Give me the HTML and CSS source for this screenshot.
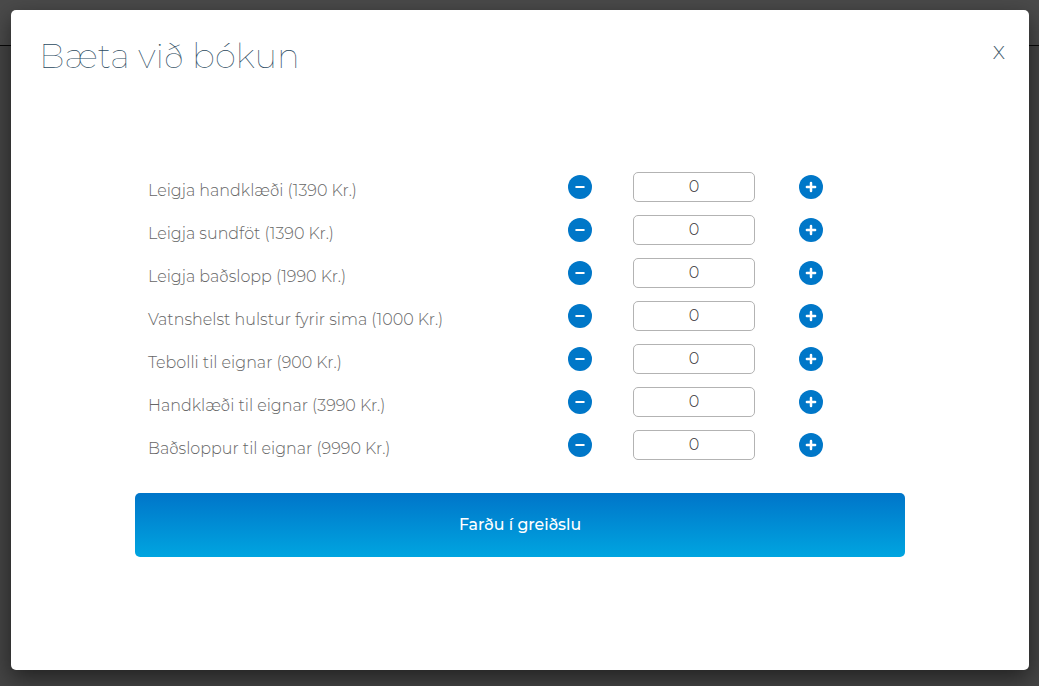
FILE: index.html
```html
<!DOCTYPE html>
<html lang="is">
<head>
<meta charset="utf-8">
<title>Bæta við bókun</title>
<link rel="stylesheet" href="styles.css">
</head>
<body>
<svg class="sprite" aria-hidden="true">
<symbol id="minus" viewBox="0 0 24 24"><circle cx="12" cy="12" r="12" fill="#0077c8"/><path d="M8.3 12h7.4" stroke="#fff" stroke-width="2.2" stroke-linecap="round"/></symbol>
<symbol id="plus" viewBox="0 0 24 24"><circle cx="12" cy="12" r="12" fill="#0077c8"/><path d="M7.9 12h8.2M12 7.9v8.2" stroke="#fff" stroke-width="2.5" stroke-linecap="round"/></symbol>
</svg>
<main class="modal">
<header class="header"><h1 class="title">Bæta við bókun</h1><button class="close">X</button></header>
<section class="items">
<div class="row"><span class="label">Leigja handklæði (1390 Kr.)</span><button class="step"><svg><use href="#minus"/></svg></button><input class="qty" value="0"><button class="step"><svg><use href="#plus"/></svg></button></div>
<div class="row"><span class="label">Leigja sundföt (1390 Kr.)</span><button class="step"><svg><use href="#minus"/></svg></button><input class="qty" value="0"><button class="step"><svg><use href="#plus"/></svg></button></div>
<div class="row"><span class="label">Leigja baðslopp (1990 Kr.)</span><button class="step"><svg><use href="#minus"/></svg></button><input class="qty" value="0"><button class="step"><svg><use href="#plus"/></svg></button></div>
<div class="row"><span class="label">Vatnshelst hulstur fyrir sima (1000 Kr.)</span><button class="step"><svg><use href="#minus"/></svg></button><input class="qty" value="0"><button class="step"><svg><use href="#plus"/></svg></button></div>
<div class="row"><span class="label">Tebolli til eignar (900 Kr.)</span><button class="step"><svg><use href="#minus"/></svg></button><input class="qty" value="0"><button class="step"><svg><use href="#plus"/></svg></button></div>
<div class="row"><span class="label">Handklæði til eignar (3990 Kr.)</span><button class="step"><svg><use href="#minus"/></svg></button><input class="qty" value="0"><button class="step"><svg><use href="#plus"/></svg></button></div>
<div class="row"><span class="label">Baðsloppur til eignar (9990 Kr.)</span><button class="step"><svg><use href="#minus"/></svg></button><input class="qty" value="0"><button class="step"><svg><use href="#plus"/></svg></button></div>
</section>
<button class="pay">Farðu í greiðslu</button>
</main>
</body>
</html>
```
FILE: styles.css
```css
* { box-sizing: border-box; }
body {
  margin: 0;
  height: 686px;
  padding: 10px 10px 16px 11px;
  overflow: hidden;
  font-family: Montserrat, Inter, "Open Sans", sans-serif;
  background: linear-gradient(#4a4a4a 45px, #080808 45px, #080808 46px, #444 46px);
}
.sprite { display: none; }
button { padding: 0; border: 0; background: none; font-family: inherit; }
.modal {
  height: 660px;
  display: flex;
  flex-direction: column;
  background: #fff;
  border-radius: 5px;
  box-shadow: 0 8px 22px rgba(0, 0, 0, .5);
}
.header {
  height: 162px;
  padding: 24px 24px 0 28px;
  display: flex;
  justify-content: space-between;
  align-items: flex-start;
}
.title {
  margin: 0;
  font-size: 34px;
  line-height: 44px;
  font-weight: 100;
  color: #2b4a60;
}
.close { font-size: 19px; line-height: 38px; font-weight: 300; color: #3f5a6c; }
.items { height: 321px; padding-left: 137px; }
.row {
  height: 43px;
  display: grid;
  grid-template-columns: 420px 65px 166px 24px;
  align-items: start;
}
.label {
  padding-top: 7px;
  font-size: 15.95px;
  line-height: 24px;
  font-weight: 300;
  color: #666;
  white-space: nowrap;
}
.step { width: 24px; height: 24px; margin-top: 3px; }
.step svg { display: block; width: 24px; height: 24px; }
.qty {
  width: 122px;
  height: 30px;
  padding: 0 0 1px;
  border: 1px solid #b3b3b3;
  border-radius: 5px;
  background: #fff;
  font: 300 16px/27px Montserrat, Inter, sans-serif;
  text-align: center;
  color: #333;
}
.pay {
  width: 770px;
  height: 64px;
  padding: 0 0 2px;
  margin-left: 124px;
  border-radius: 5px;
  background: linear-gradient(#0075c9, #00a5e0);
  color: #fff;
  font-size: 15.8px;
  font-weight: 500;
}
```
